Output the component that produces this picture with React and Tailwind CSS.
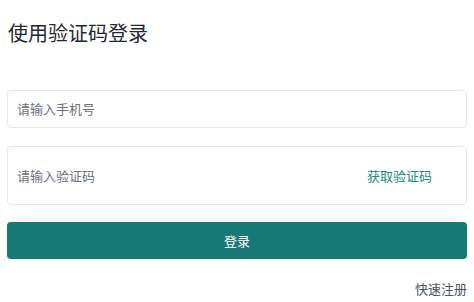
import React from 'react';

const font = { fontFamily: '"Noto Sans CJK SC", "Noto Sans", sans-serif' };

export default function App() {
  return (
    <div className="w-[474px] h-[302px] bg-white px-[7px] flex flex-col" style={font}>
      <h1 className="mt-[19px] pl-px text-[20px] leading-[28px] text-[#1f2937] font-normal">
        使用验证码登录
      </h1>

      <div className="mt-[43px] h-[38px] border border-[#e5e7eb] rounded-[4px] flex items-center pl-[9px]">
        <input
          className="flex-1 outline-none text-[13px] placeholder:text-[#6b7280] bg-transparent"
          placeholder="请输入手机号"
        />
      </div>

      <div className="mt-[18px] h-[59px] border border-[#e5e7eb] rounded-[4px] flex items-center pl-[9px] pr-[34px]">
        <input
          className="flex-1 outline-none text-[13px] placeholder:text-[#6b7280] bg-transparent"
          placeholder="请输入验证码"
        />
        <button className="text-[13px] text-[#1b8a80]">获取验证码</button>
      </div>

      <button className="mt-[17px] h-[37px] w-full rounded-[4px] bg-[#187a76] text-white text-[13px]">
        登录
      </button>

      <div className="mt-[21px] flex justify-end">
        <span className="text-[13px] leading-[18px] text-[#4b5563]">快速注册</span>
      </div>
    </div>
  );
}
